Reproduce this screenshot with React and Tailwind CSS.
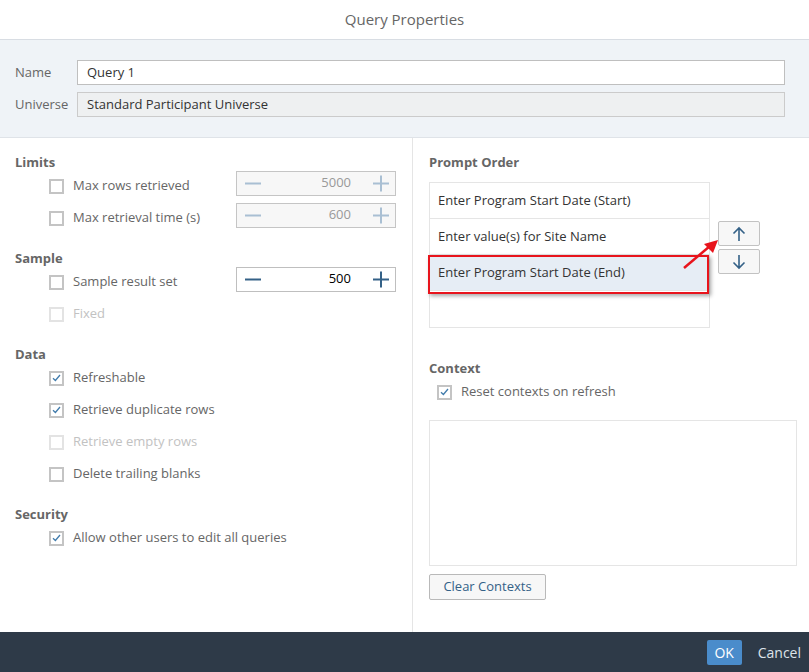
import React from "react";

// Simple SAP-style checkbox
const CheckBox = ({ checked = false, disabled = false }) => (
  <span
    className={`flex items-center justify-center w-[15px] h-[15px] border-2 bg-white ${
      disabled ? "border-[#e3e3e3]" : "border-[#c4c4c4]"
    }`}
  >
    {checked && (
      <svg width="9" height="8" viewBox="0 0 9 8">
        <path d="M1 4.2 L3.4 6.5 L8 1" fill="none" stroke="#427cac" strokeWidth="1.3" />
      </svg>
    )}
  </span>
);

const CheckRow = ({ label, checked, disabled, right }) => (
  <div className="flex items-center h-[32px] pl-[34px]">
    <CheckBox checked={checked} disabled={disabled} />
    <span className={`ml-[9px] w-[163px] ${disabled ? "text-[#c2c2c2]" : "text-[#666]"}`}>{label}</span>
    {right}
  </div>
);

const StepInput = ({ value, disabled = false }) => {
  const icon = disabled ? "#a9bfd3" : "#346187";
  return (
    <div
      className={`flex items-center w-[160px] h-[25px] mt-[-6px] border ${
        disabled ? "bg-[#f7f7f7] border-[#c5c5c5]" : "bg-white border-[#bfbfbf]"
      }`}
    >
      <svg width="34" height="23" viewBox="0 0 34 23">
        <path d="M8 11.5 H24" stroke={icon} strokeWidth="2" />
      </svg>
      <span className={`flex-1 text-right ${disabled ? "text-[#999]" : "text-black"}`}>{value}</span>
      <svg width="44" height="23" viewBox="0 0 44 23">
        <path d="M22 11.5 H38 M30 3.5 V19.5" stroke={icon} strokeWidth="2" />
      </svg>
    </div>
  );
};

const Heading = ({ children }) => (
  <div className="h-4 leading-4 font-bold text-[#666]">{children}</div>
);

const prompts = [
  "Enter Program Start Date (Start)",
  "Enter value(s) for Site Name",
  "Enter Program Start Date (End)",
];

export default function App() {
  return (
    <div
      className="w-[809px] h-[672px] flex flex-col bg-white text-[13px] overflow-hidden"
      style={{ fontFamily: '"Open Sans", "Noto Sans", sans-serif' }}
    >
      {/* dialog title */}
      <div className="h-[40px] shrink-0 flex items-center justify-center border-b border-[#d8dde3] text-[15px] text-[#666]">
        Query Properties
      </div>

      {/* name / universe */}
      <div className="h-[98px] shrink-0 bg-[#eff3f7] border-b border-[#dfe3e8] px-[15px] pt-[20px] flex flex-col gap-[7px]">
        <div className="flex items-center">
          <span className="w-[62px] text-[#666]">Name</span>
          <div className="flex-1 h-[25px] mr-[9px] bg-white border border-[#bfbfbf] flex items-center px-[9px] text-[#333]">
            Query 1
          </div>
        </div>
        <div className="flex items-center">
          <span className="w-[62px] text-[#666]">Universe</span>
          <div className="flex-1 h-[25px] mr-[9px] bg-[#eef0f1] border border-[#cbcbcb] flex items-center px-[9px] text-[#333]">
            Standard Participant Universe
          </div>
        </div>
      </div>

      <div className="flex flex-1 min-h-0">
        {/* left column */}
        <div className="w-[413px] shrink-0 border-r border-[#e5e5e5] pt-[16px] px-[15px]">
          <Heading>Limits</Heading>
          <CheckRow label="Max rows retrieved" right={<StepInput value="5000" disabled />} />
          <CheckRow label="Max retrieval time (s)" right={<StepInput value="600" disabled />} />

          <div className="mt-[16px]">
            <Heading>Sample</Heading>
            <CheckRow label="Sample result set" right={<StepInput value="500" />} />
            <CheckRow label="Fixed" disabled />
          </div>

          <div className="mt-[16px]">
            <Heading>Data</Heading>
            <CheckRow label="Refreshable" checked />
            <CheckRow label="Retrieve duplicate rows" checked />
            <CheckRow label="Retrieve empty rows" disabled />
            <CheckRow label="Delete trailing blanks" />
          </div>

          <div className="mt-[16px]">
            <Heading>Security</Heading>
            <div className="flex items-center h-[32px] pl-[34px]">
              <CheckBox checked />
              <span className="ml-[9px] text-[#666]">Allow other users to edit all queries</span>
            </div>
          </div>
        </div>

        {/* right column */}
        <div className="flex-1 pt-[16px] pl-[16px] pr-[12px]">
          <Heading>Prompt Order</Heading>
          <div className="flex mt-[12px]">
            <div className="relative w-[281px] h-[146px] border border-[#e5e5e5]">
              {prompts.map((p, i) => (
                <div
                  key={p}
                  className={`h-[36px] flex items-center pl-[8px] border-b border-[#e5e5e5] text-[#333] ${
                    i === 2 ? "bg-[#e6edf5]" : ""
                  }`}
                >
                  {p}
                </div>
              ))}
              {/* red highlight around the selected prompt */}
              <div className="absolute left-[-2px] top-[72px] w-[281px] h-[39px] border-2 border-[#e8141c] shadow-[2px_2px_4px_rgba(0,0,0,0.35)]" />
              <svg className="absolute left-[252px] top-[55px] overflow-visible" width="40" height="34" viewBox="0 0 40 34">
                <path d="M2 30 L28 8" stroke="#e8141c" strokeWidth="2.5" />
                <path d="M36 2 L22 6 L31 15 Z" fill="#e8141c" />
              </svg>
            </div>
            <div className="ml-[8px] pt-[39px] flex flex-col gap-[3px]">
              <button className="w-[42px] h-[25px] flex items-center justify-center bg-[#f7f7f7] border border-[#c2c2c2] rounded-[2px]">
                <svg width="14" height="16" viewBox="0 0 14 16">
                  <path d="M7 15 V2 M1.5 7.5 L7 2 L12.5 7.5" fill="none" stroke="#346187" strokeWidth="1.6" />
                </svg>
              </button>
              <button className="w-[42px] h-[25px] flex items-center justify-center bg-[#f7f7f7] border border-[#c2c2c2] rounded-[2px]">
                <svg width="14" height="16" viewBox="0 0 14 16">
                  <path d="M7 1 V14 M1.5 8.5 L7 14 L12.5 8.5" fill="none" stroke="#346187" strokeWidth="1.6" />
                </svg>
              </button>
            </div>
          </div>

          <div className="mt-[32px]">
            <Heading>Context</Heading>
            <div className="flex items-center h-[32px] pl-[8px]">
              <CheckBox checked />
              <span className="ml-[9px] text-[#666]">Reset contexts on refresh</span>
            </div>
          </div>
          <div className="mt-[12px] w-[368px] h-[146px] border border-[#e5e5e5]" />
          <button className="mt-[8px] h-[26px] w-[117px] bg-[#f7f7f7] border border-[#b9b9b9] rounded-[2px] text-[#346187]">
            Clear Contexts
          </button>
        </div>
      </div>

      {/* footer */}
      <div className="h-[40px] shrink-0 bg-[#2e3a48] flex items-center justify-end pr-[8px] gap-[16px]">
        <button className="w-[35px] h-[25px] rounded-[2px] bg-[#4a8ccb] text-white text-[14px]">OK</button>
        <span className="text-[14px] text-[#dde3ea]">Cancel</span>
      </div>
    </div>
  );
}
